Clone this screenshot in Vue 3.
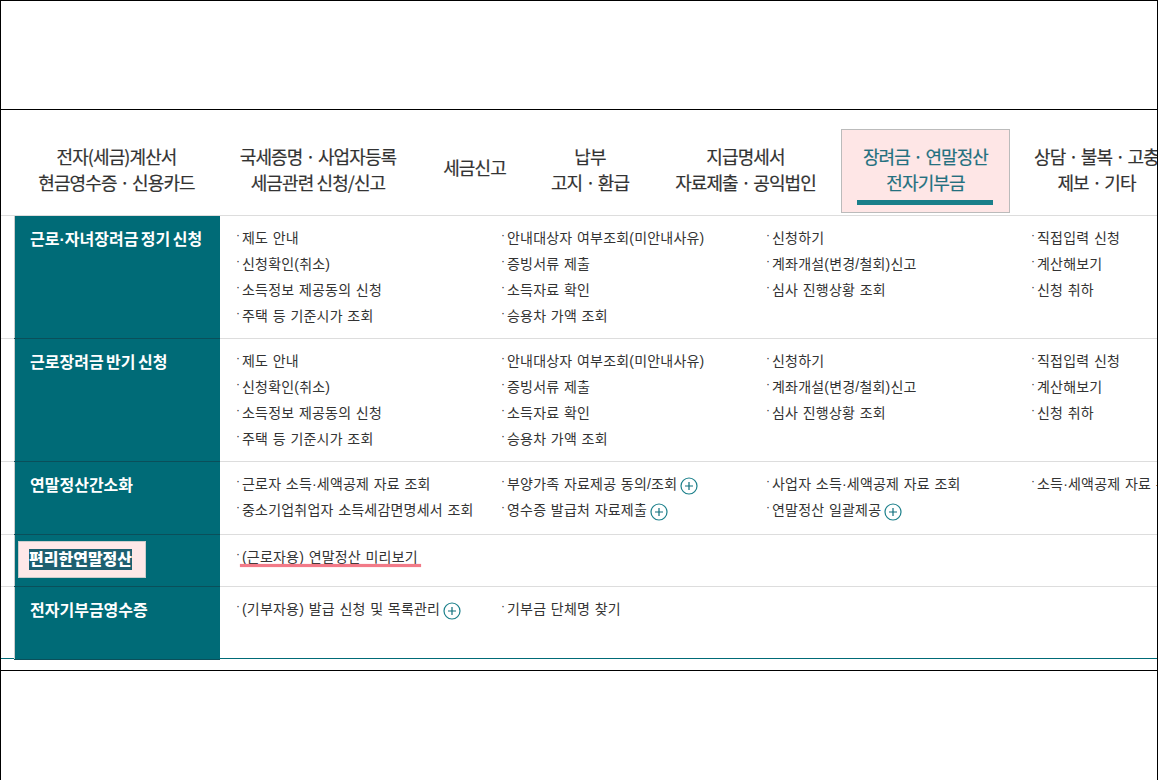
<script setup>
const navItems = [
  { lines: ["전자(세금)계산서", "현금영수증 · 신용카드"] },
  { lines: ["국세증명 · 사업자등록", "세금관련 신청/신고"] },
  { lines: ["세금신고"] },
  { lines: ["납부", "고지 · 환급"] },
  { lines: ["지급명세서", "자료제출 · 공익법인"] },
  { lines: ["장려금 · 연말정산", "전자기부금"], active: true },
  { lines: ["상담 · 불복 · 고충", "제보 · 기타"] },
];

const jangryeo = [
  [{ t: "제도 안내" }, { t: "신청확인(취소)" }, { t: "소득정보 제공동의 신청" }, { t: "주택 등 기준시가 조회" }],
  [{ t: "안내대상자 여부조회(미안내사유)" }, { t: "증빙서류 제출" }, { t: "소득자료 확인" }, { t: "승용차 가액 조회" }],
  [{ t: "신청하기" }, { t: "계좌개설(변경/철회)신고" }, { t: "심사 진행상황 조회" }],
  [{ t: "직접입력 신청" }, { t: "계산해보기" }, { t: "신청 취하" }],
];

const rows = [
  { title: "근로·자녀장려금 정기 신청", cls: "h123", cols: jangryeo },
  { title: "근로장려금 반기 신청", cls: "h123", cols: jangryeo },
  {
    title: "연말정산간소화",
    cls: "h73",
    cols: [
      [{ t: "근로자 소득·세액공제 자료 조회" }, { t: "중소기업취업자 소득세감면명세서 조회" }],
      [{ t: "부양가족 자료제공 동의/조회", plus: true }, { t: "영수증 발급처 자료제출", plus: true }],
      [{ t: "사업자 소득·세액공제 자료 조회" }, { t: "연말정산 일괄제공", plus: true }],
      [{ t: "소득·세액공제 자료 수정" }],
    ],
  },
  {
    title: "편리한연말정산",
    cls: "h52",
    marked: true,
    cols: [[{ t: "(근로자용) 연말정산 미리보기", underline: true }]],
  },
  {
    title: "전자기부금영수증",
    cls: "h72",
    cols: [[{ t: "(기부자용) 발급 신청 및 목록관리", plus: true }], [{ t: "기부금 단체명 찾기" }]],
  },
];
</script>

<template>
  <div class="page">
    <div class="top"></div>
    <div class="band">
      <nav class="nav">
        <a v-for="item in navItems" class="nav-item" :class="{ active: item.active }">
          <span v-for="line in item.lines">{{ line }}</span>
          <i v-if="item.active" class="bar"></i>
        </a>
      </nav>
      <div class="table">
        <div v-for="row in rows" class="row" :class="row.cls">
          <div class="head">
            <span v-if="row.marked" class="mark"><b>{{ row.title }}</b></span>
            <template v-else>{{ row.title }}</template>
          </div>
          <div class="cols">
            <ul v-for="col in row.cols" class="col">
              <li v-for="link in col">
                <span class="dot">·</span>
                <span class="label" :class="{ underline: link.underline }">{{ link.t }}</span>
                <svg v-if="link.plus" class="plus" viewBox="0 0 18 18" width="18" height="18">
                  <circle cx="9" cy="9" r="8" fill="none" stroke="#1a7f8a" stroke-width="1.2" />
                  <path d="M9 5v8M5 9h8" stroke="#0f6f7c" stroke-width="1.2" fill="none" />
                </svg>
              </li>
            </ul>
          </div>
        </div>
      </div>
    </div>
    <div class="bottom"></div>
  </div>
</template>

<style scoped>
.page {
  width: 1158px;
  height: 780px;
  box-sizing: border-box;
  border-top: 1px solid #000;
  border-left: 1px solid #000;
  border-right: 1px solid #000;
  overflow: hidden;
  font-family: "Noto Sans CJK KR", "Noto Sans", sans-serif;
  color: #333;
  background: #fff;
}
.top {
  height: 108px;
  border-bottom: 1px solid #000;
}
.band {
  height: 560px;
  overflow: hidden;
  border-bottom: 1px solid #000;
}
.nav {
  display: grid;
  grid-template-columns: 201px 202px 111px 120px 191px 169px 173px;
  width: 1200px;
  margin-left: 15px;
  height: 105px;
  padding-top: 19px;
  box-sizing: border-box;
}
.nav-item {
  height: 84px;
  box-sizing: border-box;
  display: flex;
  flex-direction: column;
  align-items: center;
  justify-content: flex-start;
  padding-top: 14px;
  font-size: 18px;
  line-height: 26px;
  letter-spacing: -0.9px;
  color: #333;
  -webkit-text-stroke: 0.2px currentColor;
  position: relative;
}
.nav-item:nth-child(3) {
  justify-content: center;
  padding-top: 0;
  padding-bottom: 8px;
}
.nav-item.active {
  background: #fee6e6;
  border: 1px solid #bbb;
  color: #23707f;
  padding-top: 13px;
}
.bar {
  position: absolute;
  left: 15px;
  right: 16px;
  bottom: 7px;
  height: 5px;
  background: #1a7f8a;
}
.table {
  border-top: 1px solid #ddd;
  border-bottom: 1px solid #006b77;
  height: 444px;
  box-sizing: border-box;
}
.row {
  display: flex;
  border-bottom: 1px solid #ddd;
  box-sizing: border-box;
}
.row:last-child {
  border-bottom: 0;
}
.h123 { height: 123px; }
.h73 { height: 73px; }
.h52 { height: 52px; }
.h72 { height: 72px; }
.head {
  width: 206px;
  margin-left: 13px;
  flex: none;
  background: #006b77;
  color: #fff;
  font-family: "Liberation Sans", "Noto Sans CJK KR", sans-serif;
  font-size: 16px;
  font-weight: 700;
  word-spacing: -2px;
  line-height: 24px;
  padding: 12px 0 0 15px;
  box-sizing: border-box;
  border-left: 1px solid #ccc;
  box-shadow: 0 1px 0 #0a4f5a;
  position: relative;
}
.mark {
  position: absolute;
  left: 3px;
  top: 6px;
  width: 128px;
  height: 37px;
  box-sizing: border-box;
  background: #fee8e8;
  border: 1px solid #ccc;
  display: flex;
  align-items: flex-start;
  padding: 7px 0 0 10px;
}
.mark b {
  background: #1d6070;
  color: #fff;
  line-height: 20px;
  height: 20px;
  padding-top: 1px;
}
.cols {
  display: grid;
  grid-template-columns: repeat(4, 265px);
  padding: 8px 0 0 16px;
  width: 1100px;
  flex: none;
}
.col {
  list-style: none;
  margin: 0;
  padding: 0;
}
.col li {
  display: flex;
  align-items: center;
  height: 26px;
  white-space: nowrap;
  font-family: "Liberation Sans", "Noto Sans CJK KR", sans-serif;
  font-size: 14px;
  color: #333;
}
.dot {
  width: 6px;
  flex: none;
  margin-top: -5px;
  font-size: 12px;
}
.label {
  letter-spacing: 0.2px;
  word-spacing: 0.5px;
}
.underline {
  position: relative;
}
.underline::after {
  content: "";
  position: absolute;
  left: -2px;
  right: -3px;
  bottom: -1px;
  height: 3px;
  background: #f27a88;
  box-shadow: 0 0 1px #f27a88;
}
.plus {
  margin-left: 3px;
  margin-top: 5px;
  flex: none;
}
</style>
